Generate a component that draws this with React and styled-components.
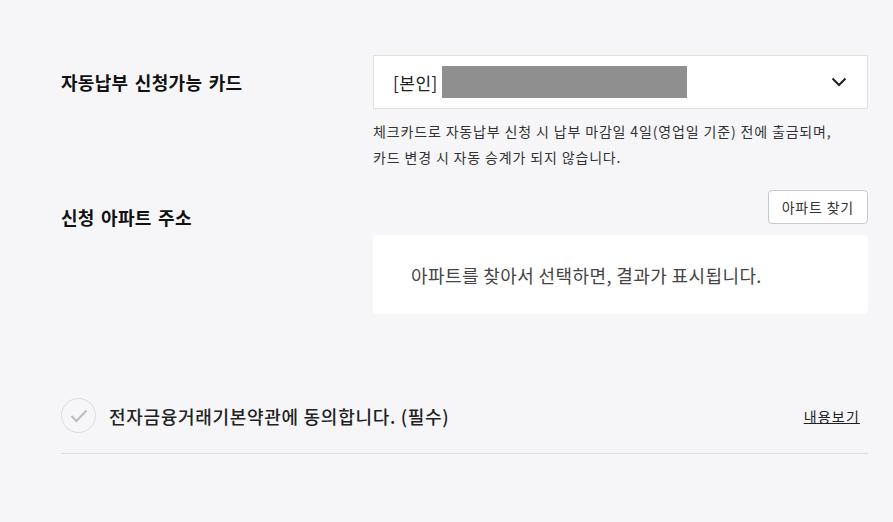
import React from 'react';
import styled, { createGlobalStyle } from 'styled-components';

const GlobalStyle = createGlobalStyle`
    body {
        margin: 0;
        background: #f6f6f8;
        font-family: "Noto Sans CJK KR", "Noto Sans", sans-serif;
        color: #222;
    }
`

const Page = styled.div`
    padding: 55px 25px 60px 61px;
`

const Row = styled.div`
    display: grid;
    grid-template-columns: 312px 1fr;
    margin-top: ${p => p.gap || 0}px;
`

const Label = styled.h3`
    margin: 0;
    padding-top: 14px;
    font-size: 18px;
    line-height: 26px;
    font-weight: 700;
    color: #111;
    letter-spacing: 0.3px;
    word-spacing: 2px;
`

const Field = styled.div`
    display: flex;
    flex-direction: column;
`

const Select = styled.div`
    height: 52px;
    border: 1px solid #e1e1e3;
    background: #fff;
    display: flex;
    align-items: center;
    padding: 0 20px 0 19px;
`

const Owner = styled.span`
    font-size: 17px;
    letter-spacing: 0.5px;
    color: #222;
    margin-right: 4px;
`

const Redacted = styled.span`
    width: 245px;
    height: 32px;
    background: #8f8f8f;
`

const Chevron = styled.svg`
    margin-left: auto;
`

const Help = styled.p`
    margin: 9px 0 0;
    font-size: 14px;
    letter-spacing: 0.85px;
    line-height: 26px;
    color: #333;
`

const FindButton = styled.button`
    align-self: flex-end;
    height: 34px;
    padding: 0 13px;
    background: #fff;
    border: 1px solid #c9c9cb;
    border-radius: 4px;
    font-family: inherit;
    font-size: 14px;
    letter-spacing: 0.8px;
    color: #333;
`

const ResultBox = styled.div`
    margin-top: 11px;
    height: 79px;
    background: #fff;
    border-radius: 4px;
    display: flex;
    align-items: center;
    padding-left: 38px;
    font-size: 18px;
    letter-spacing: 0.4px;
    color: #444;
`

const Agree = styled.div`
    margin-top: 84px;
    display: flex;
    align-items: center;
    padding-bottom: 20px;
    border-bottom: 1px solid #dcdcde;
`

const Check = styled.span`
    width: 33px;
    height: 33px;
    border: 1px solid #dcdcdc;
    border-radius: 50%;
    display: flex;
    align-items: center;
    justify-content: center;
    margin-right: 13px;
`

const AgreeText = styled.span`
    font-size: 18px;
    letter-spacing: 0.7px;
    font-weight: 500;
    color: #222;
    flex: 1;
`

const More = styled.a`
    font-size: 14px;
    letter-spacing: 1.2px;
    color: #222;
    text-decoration: underline;
    margin-right: 8px;
`

export default function App() {
    return (
        <Page>
            <GlobalStyle />
            <Row>
                <Label>자동납부 신청가능 카드</Label>
                <Field>
                    <Select>
                        <Owner>[본인]</Owner>
                        <Redacted />
                        <Chevron width="16" height="10" viewBox="0 0 16 10">
                            <path d="M1.5 1.5 L8 8 L14.5 1.5" fill="none" stroke="#222" strokeWidth="2" />
                        </Chevron>
                    </Select>
                    <Help>
                        체크카드로 자동납부 신청 시 납부 마감일 4일(영업일 기준) 전에 출금되며,<br />
                        카드 변경 시 자동 승계가 되지 않습니다.
                    </Help>
                </Field>
            </Row>
            <Row gap={20}>
                <Label>신청 아파트 주소</Label>
                <Field>
                    <FindButton>아파트 찾기</FindButton>
                    <ResultBox>아파트를 찾아서 선택하면, 결과가 표시됩니다.</ResultBox>
                </Field>
            </Row>
            <Agree>
                <Check>
                    <svg width="18" height="14" viewBox="0 0 18 14">
                        <path d="M1.5 7 L6.5 12 L16.5 1.5" fill="none" stroke="#bdbdbd" strokeWidth="2" />
                    </svg>
                </Check>
                <AgreeText>전자금융거래기본약관에 동의합니다. (필수)</AgreeText>
                <More href="#">내용보기</More>
            </Agree>
        </Page>
    )
}
